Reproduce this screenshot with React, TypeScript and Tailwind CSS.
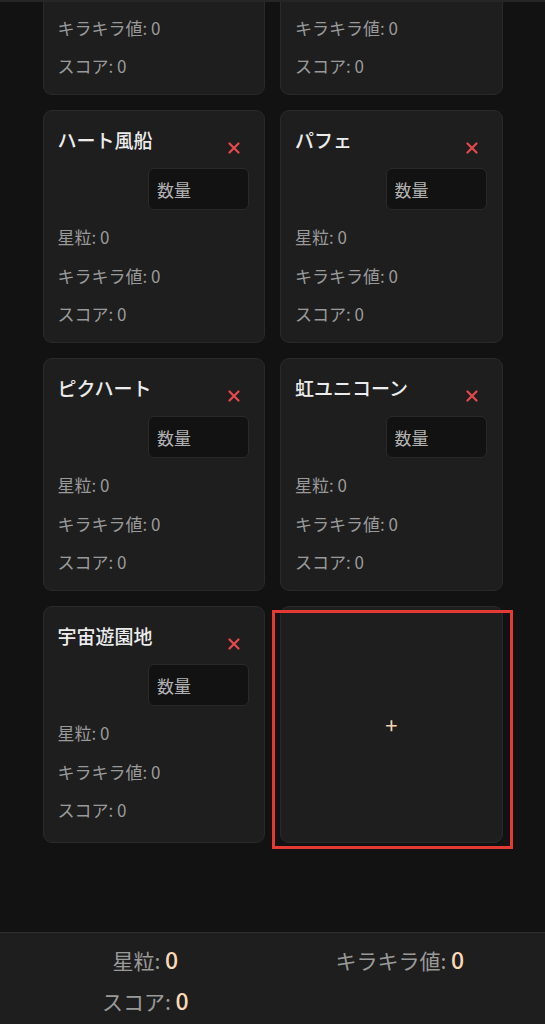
import { useState } from 'react'

type Item = { id: string; name: string }

const initialItems: Item[] = [
  { id: 'a', name: '流れ星' },
  { id: 'b', name: 'ムーンキャンディ' },
  { id: 'c', name: 'ハート風船' },
  { id: 'd', name: 'パフェ' },
  { id: 'e', name: 'ピクハート' },
  { id: 'f', name: '虹ユニコーン' },
  { id: 'g', name: '宇宙遊園地' },
]

const font = { fontFamily: '"Noto Sans CJK JP", "Noto Sans", sans-serif' }

function ItemCard({ item, onRemove }: { item: Item; onRemove: () => void }) {
  const [qty, setQty] = useState('')
  const n = Number(qty) || 0
  return (
    <div className="flex min-h-[233px] flex-col rounded-[9px] border border-[#2a2a2a] bg-[#1e1e1e] pb-4 pl-[14px] pr-[15px] pt-[15px]">
      <div className="flex items-start justify-between">
        <h3 className="truncate text-[19px] font-medium leading-[28px] text-[#ececec]">{item.name}</h3>
        <button
          type="button"
          onClick={onRemove}
          className="mt-2 flex h-[28px] w-[30px] shrink-0 items-center justify-center text-[#e5484d]"
          aria-label="削除"
        >
          <svg viewBox="0 0 12 12" className="h-3 w-3" fill="none" stroke="currentColor" strokeWidth="2.2" strokeLinecap="round">
            <path d="M1.5 1.5l9 9M10.5 1.5l-9 9" />
          </svg>
        </button>
      </div>
      <input
        value={qty}
        onChange={(e) => setQty(e.target.value)}
        placeholder="数量"
        className="ml-auto mt-[6px] h-[42px] w-[101px] rounded-[6px] border border-[#2a2a2a] bg-[#121212] px-2 text-[17px] text-[#d8d8d8] outline-none placeholder:text-[#b4b4b4]"
        style={font}
      />
      <div className="mt-[15px] flex flex-col gap-[14.5px] text-[17px] leading-[24px] text-[#9a9a9a]">
        <p>星粒: {n * 0}</p>
        <p>キラキラ値: {n * 0}</p>
        <p>スコア: {n * 0}</p>
      </div>
    </div>
  )
}

export default function App() {
  const [items, setItems] = useState(initialItems)

  return (
    <div className="flex h-screen flex-col overflow-hidden bg-[#121212]" style={font}>
      <main className="min-h-0 flex-1 overflow-hidden border-t-2 border-[#262626]">
        <div className="mx-auto -mt-[140px] grid w-[460px] grid-cols-2 gap-[15px]">
          {items.map((item) => (
            <ItemCard key={item.id} item={item} onRemove={() => setItems(items.filter((i) => i.id !== item.id))} />
          ))}
          <div className="relative">
            <button
              type="button"
              onClick={() => setItems([...items, { id: String(Date.now()), name: '新しいアイテム' }])}
              className="flex h-full min-h-[237px] w-full items-center justify-center rounded-[9px] border border-[#2a2a2a] bg-[#1e1e1e] text-[22px] text-[#f3d3b5]"
            >
              +
            </button>
            <div className="pointer-events-none absolute -bottom-[6px] -left-[8px] -right-[10px] top-[4px] border-[3px] border-[#e53a33]" />
          </div>
        </div>
      </main>
      <footer className="grid h-[92px] shrink-0 grid-cols-2 content-start gap-y-3 border-t border-[#2e2e2e] bg-[#1e1e1e] px-[18px] pt-[12px] text-[21px] leading-[28px] text-[#9a9a9a]">
        <p className="text-center">
          星粒: <span className="text-[23px] font-medium text-[#fcd9b6]">0</span>
        </p>
        <p className="text-center">
          キラキラ値: <span className="text-[23px] font-medium text-[#fcd9b6]">0</span>
        </p>
        <p className="text-center">
          スコア: <span className="text-[23px] font-medium text-[#fcd9b6]">0</span>
        </p>
      </footer>
    </div>
  )
}
